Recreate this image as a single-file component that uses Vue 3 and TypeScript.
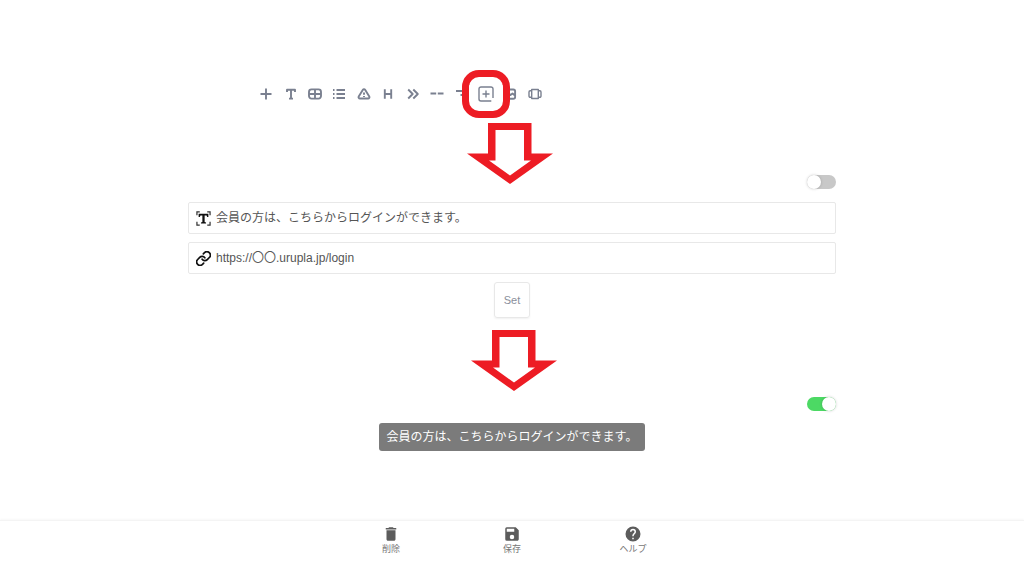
<script setup lang="ts">
import { ref } from 'vue'

interface Tool {
  label: string
  path: string
  marked?: boolean
  thin?: boolean
}

const tools: Tool[] = [
  { label: '追加', path: 'M8 2.500v11M2.500 8h11' },
  { label: 'テキスト', path: 'M4 6V3.800h8V6M8 3.800v9M6 12.600h4' },
  { label: '表', path: 'M4.500 3.400h7a2.500 2.500 0 0 1 2.500 2.500v4.200a2.500 2.500 0 0 1-2.500 2.500h-7A2.500 2.500 0 0 1 2 10.100V5.900a2.500 2.500 0 0 1 2.500-2.500zM8 3.400v9.200M2 8h12' },
  { label: 'リスト', path: 'M5.500 4H14M5.500 8H14M5.500 12H14M2 4h1.500M2 8h1.500M2 12h1.500' },
  { label: '注意', path: 'M6.900 3.800 2.700 10.400a1.400 1.400 0 0 0 1.200 2.100h8.200a1.400 1.400 0 0 0 1.200-2.100L9.100 3.800a1.300 1.300 0 0 0-2.200 0zM8 6.400v2.400M8 9.900v1.200' },
  { label: '見出し', path: 'M4.800 3.300v9.400M11.200 3.300v9.400M4.800 8h6.400' },
  { label: '引用', path: 'M3.200 3.500 7.700 8l-4.500 4.500M8.300 3.500 12.800 8l-4.500 4.500' },
  { label: '区切り', path: 'M1.500 7.500h5.700M8.800 7.500h5.700' },
  { label: '配置', path: 'M2 5h12M6.500 9H14M10 12h4' },
  { label: 'ボタン', path: 'M15 12V3A2 2 0 0 0 13 1H3A2 2 0 0 0 1 3v10a2 2 0 0 0 2 2h10.300M8 4.500v7M4.500 8h7', marked: true, thin: true },
  { label: '画像', path: 'M4.300 3.500h7A1.800 1.800 0 0 1 13.100 5.300v5.600a1.800 1.800 0 0 1-1.800 1.800h-7a1.800 1.800 0 0 1-1.800-1.800V5.300a1.800 1.800 0 0 1 1.800-1.800zM3 9l3-2 2.500 2 2-1.500L13 9.500' },
  { label: 'カルーセル', path: 'M4.700 3.500h6.600v9H4.700zM4.700 4.700H3.200A1.200 1.200 0 0 0 2 5.900v4.200a1.200 1.200 0 0 0 1.200 1.200h1.500M11.300 4.700h1.500A1.200 1.200 0 0 1 14 5.900v4.200a1.200 1.200 0 0 1-1.200 1.200h-1.500', thin: true },
]

const caption = ref('会員の方は、こちらからログインができます。')
const link = ref('https://〇〇.urupla.jp/login')
const before = ref(false)
const after = ref(true)

const actions = [
  { label: '削除', path: 'M6 19c0 1.100.9 2 2 2h8c1.100 0 2-.9 2-2V7H6v12zM19 4h-3.500l-1-1h-5l-1 1H5v2h14V4z' },
  { label: '保存', path: 'M17 3H5a2 2 0 0 0-2 2v14a2 2 0 0 0 2 2h14c1.100 0 2-.9 2-2V7l-4-4zm-5 16a3 3 0 1 1 0-6 3 3 0 0 1 0 6zm3-10H5V5h10v4z' },
  { label: 'ヘルプ', path: 'M12 2a10 10 0 1 0 0 20 10 10 0 0 0 0-20zm1 17h-2v-2h2v2zm2.070-7.750-.9.920C13.450 12.900 13 13.500 13 15h-2v-.5c0-1.100.450-2.100 1.170-2.830l1.240-1.260c.370-.360.590-.860.590-1.410a2 2 0 1 0-4 0H8a4 4 0 1 1 8 0c0 .880-.360 1.680-.930 2.250z' },
]
</script>

<template>
  <div class="page">
    <main class="editor">
      <div class="toolbar">
        <button v-for="t in tools" :key="t.label" type="button" class="tool" :class="{ marked: t.marked, thin: t.thin }" :aria-label="t.label">
          <svg viewBox="0 0 16 16" aria-hidden="true"><path :d="t.path" /></svg>
        </button>
      </div>

      <div class="step">
        <svg class="arrow" viewBox="0 0 86 61" aria-hidden="true"><path d="M21 0H64.500V30.500H86L43 61 0 30.500H21zM28.500 7V37.500H22L43 52.500 64 37.500H57V7z" /></svg>
        <input v-model="before" class="switch" type="checkbox" role="switch" aria-label="編集の表示" />
      </div>

      <form class="fields" @submit.prevent>
        <label class="field">
          <svg viewBox="0 0 16 16" aria-hidden="true">
            <path class="line" d="M1 4.500V1h3M12 1h3v3.500M15 11.500V15h-3M4 15H1v-3.500" />
            <path d="M2.800 3h10.400v3.500h-1.300l-.6-1.700H9.200v7l1.500.4v1H5.300v-1l1.500-.4v-7H4.700l-.6 1.700H2.800z" />
          </svg>
          <input v-model="caption" type="text" aria-label="テキスト" />
        </label>
        <label class="field">
          <svg viewBox="1 1 22 22" aria-hidden="true">
            <path class="link" d="M10 13a5 5 0 0 0 7.540.540l3-3a5 5 0 0 0-7.070-7.070l-1.720 1.710M14 11a5 5 0 0 0-7.540-.540l-3 3a5 5 0 0 0 7.070 7.070l1.710-1.710" />
          </svg>
          <input v-model="link" type="text" aria-label="リンク" />
        </label>
        <button class="set" type="submit">Set</button>
      </form>

      <div class="step second">
        <svg class="arrow" viewBox="0 0 86 61" aria-hidden="true"><path d="M21 0H64.500V30.500H86L43 61 0 30.500H21zM28.500 7V37.500H22L43 52.500 64 37.500H57V7z" /></svg>
        <input v-model="after" class="switch" type="checkbox" role="switch" aria-label="完成の表示" />
      </div>

      <a class="login" href="#login">{{ caption }}</a>
    </main>

    <footer class="actions">
      <button v-for="a in actions" :key="a.label" type="button">
        <svg viewBox="0 0 24 24" aria-hidden="true"><path :d="a.path" /></svg>
        <span>{{ a.label }}</span>
      </button>
    </footer>
  </div>
</template>

<style>
body {
  margin: 0;
  background: #fff;
}
</style>

<style scoped>
.page {
  box-sizing: border-box;
  display: flex;
  flex-direction: column;
  min-height: 100vh;
  font-family: "Liberation Sans", "Noto Sans CJK JP", sans-serif;
  font-size: 12px;
  color: #555;
}
button,
input {
  font: inherit;
  color: inherit;
  margin: 0;
}
button {
  padding: 0;
  border: 0;
  background: none;
  cursor: pointer;
}
svg {
  display: block;
}
.editor {
  box-sizing: border-box;
  flex: 1;
  width: 100%;
  max-width: 648px;
  margin: 0 auto;
  padding: 82px 0 24px;
  display: flex;
  flex-direction: column;
}
.toolbar {
  display: grid;
  grid-template-columns: repeat(12, 1fr);
  width: 293px;
  margin-left: 66px;
}
.tool {
  position: relative;
  display: grid;
  place-items: center;
  height: 24px;
}
.tool svg {
  position: relative;
  width: 16px;
  height: 16px;
  fill: none;
  stroke: #7a8090;
  stroke-width: 1.9;
  stroke-linejoin: round;
}
.tool.thin svg {
  stroke-width: 1.4;
}
.marked {
  z-index: 1;
}
.marked::before {
  content: "";
  position: absolute;
  inset: -12px;
  border: 7px solid #ed1c24;
  border-radius: 17px;
  background: #fff;
}
.step {
  display: grid;
  grid-template-columns: 1fr auto 1fr;
  align-items: end;
  height: 66px;
  margin-top: 17px;
}
.arrow {
  grid-column: 2;
  align-self: start;
  width: 86px;
  height: 61px;
  margin-right: 4px;
  fill: #ed1c24;
  fill-rule: evenodd;
}
.switch {
  appearance: none;
  justify-self: end;
  display: flex;
  align-items: center;
  width: 29px;
  height: 14px;
  border-radius: 7px;
  background: #c8c8c8;
}
.switch::before {
  content: "";
  width: 14px;
  height: 14px;
  border-radius: 50%;
  background: #fff;
  box-shadow: 0 0 3px rgba(0, 0, 0, 0.2);
}
.switch:checked {
  justify-content: flex-end;
  background: #4cd964;
}
.fields {
  display: flex;
  flex-direction: column;
  align-items: center;
  gap: 8px;
  margin-top: 13px;
}
.field {
  box-sizing: border-box;
  display: flex;
  align-items: center;
  gap: 5px;
  width: 100%;
  height: 32px;
  padding: 0 7px;
  border: 1px solid #e8e8e8;
  border-radius: 2px;
}
.field svg {
  width: 15px;
  height: 15px;
  fill: #111;
}
.field .line {
  fill: none;
  stroke: #333;
  stroke-width: 1.3;
}
.field .link {
  fill: none;
  stroke: #111;
  stroke-width: 2.5;
  stroke-linecap: round;
}
.field input {
  flex: 1;
  min-width: 0;
  height: 24px;
  box-sizing: border-box;
  padding: 0 0 3px;
  border: 0;
  outline: 0;
  background: none;
}
.set {
  box-sizing: border-box;
  width: 36px;
  height: 36px;
  border: 1px solid #e8e8e8;
  border-radius: 3px;
  box-shadow: 0 1px 2px rgba(0, 0, 0, 0.06);
  font-size: 11px;
  color: #8a8f9b;
}
.second {
  height: 81px;
  margin-top: 12px;
}
.second .arrow {
  margin: 0 0 0 4px;
}
.login {
  align-self: center;
  margin-top: 12px;
  padding: 0 8px;
  border-radius: 3px;
  background: #7b7b7b;
  color: #fff;
  line-height: 28px;
  text-decoration: none;
}
.actions {
  display: flex;
  justify-content: center;
  gap: 81px;
  height: 40px;
  border-top: 1px solid #f4f4f4;
  box-shadow: 0 -1px 2px rgba(0, 0, 0, 0.03);
}
.actions button {
  display: flex;
  flex-direction: column;
  align-items: center;
  width: 40px;
  padding-top: 4px;
  font-size: 9px;
  line-height: 12px;
  color: #777;
}
.actions svg {
  width: 18px;
  height: 18px;
  fill: #5c5c5c;
}
</style>
